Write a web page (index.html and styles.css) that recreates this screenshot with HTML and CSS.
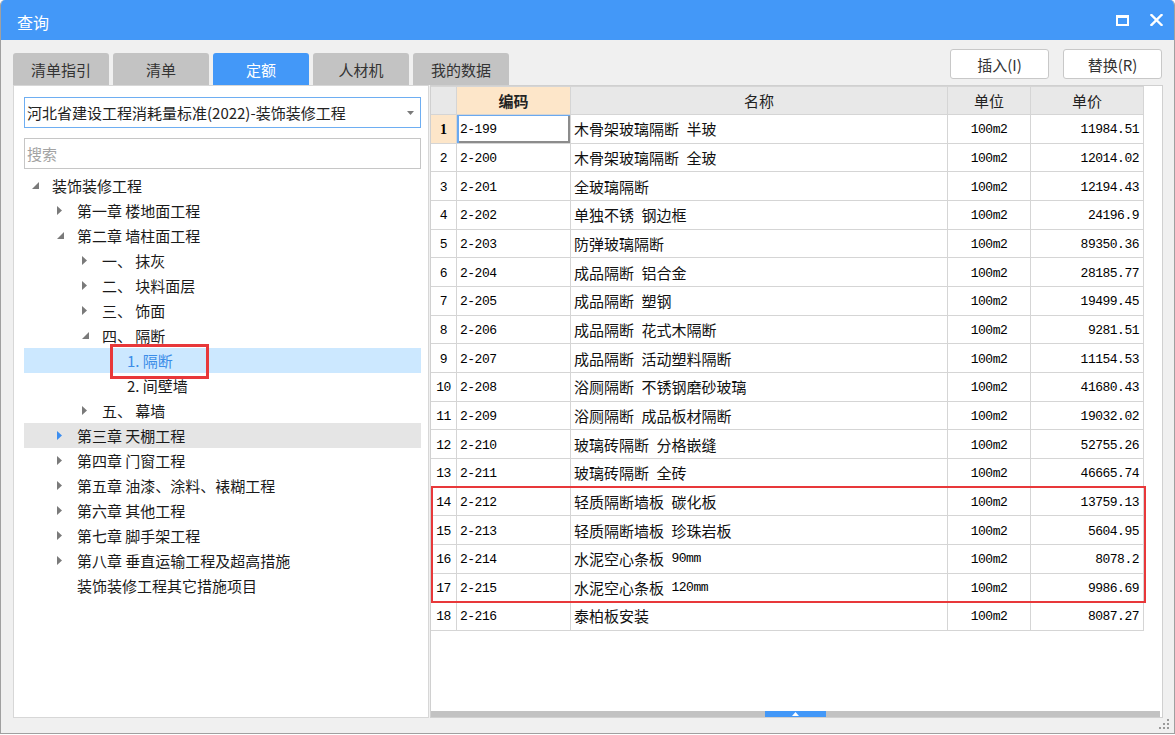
FILE: index.html
```html
<!DOCTYPE html>
<html lang="zh-CN">
<head>
<meta charset="utf-8">
<title>查询</title>
<link rel="stylesheet" href="styles.css">
</head>
<body>
<div class="window">
  <div class="titlebar">
    <span class="title">查询</span>
    <div class="win-ctrls">
      <svg class="ctrl" width="13" height="11" viewBox="0 0 13 11"><rect x="1" y="1.5" width="11" height="8.5" fill="none" stroke="#fff" stroke-width="2"/><rect x="0" y="0" width="13" height="3" fill="#fff"/></svg>
      <svg class="ctrl" width="13" height="12" viewBox="0 0 13 12"><path d="M1.5 1 L11.5 11 M11.5 1 L1.5 11" stroke="#fff" stroke-width="2.4" stroke-linecap="square" fill="none"/></svg>
    </div>
  </div>
  <div class="content">
    <div class="toolbar">
      <div class="tabs">
        <div class="tab">清单指引</div>
        <div class="tab">清单</div>
        <div class="tab active">定额</div>
        <div class="tab">人材机</div>
        <div class="tab">我的数据</div>
      </div>
      <div class="buttons">
        <button class="btn">插入(I)</button>
        <button class="btn">替换(R)</button>
      </div>
    </div>
    <div class="main">
      <div class="left-panel">
        <div class="combo">
          <span>河北省建设工程消耗量标准(2022)-装饰装修工程</span>
          <svg class="combo-arrow" width="7" height="4" viewBox="0 0 7 4"><polygon points="0,0 7,0 3.5,4" fill="#7a7a7a"/></svg>
        </div>
        <div class="search">搜索</div>
        <ul class="tree">
          <li class="node l0"><span class="twisty"><svg width="7" height="7" viewBox="0 0 7 7"><polygon points="7,0 7,7 0,7" fill="#7a7a7a"/></svg></span>装饰装修工程</li>
          <li class="node l1"><span class="twisty"><svg width="5" height="9" viewBox="0 0 5 9"><polygon points="0,0 5,4.5 0,9" fill="#7a7a7a"/></svg></span>第一章 楼地面工程</li>
          <li class="node l1"><span class="twisty"><svg width="7" height="7" viewBox="0 0 7 7"><polygon points="7,0 7,7 0,7" fill="#7a7a7a"/></svg></span>第二章 墙柱面工程</li>
          <li class="node l2"><span class="twisty"><svg width="5" height="9" viewBox="0 0 5 9"><polygon points="0,0 5,4.5 0,9" fill="#7a7a7a"/></svg></span>一、 抹灰</li>
          <li class="node l2"><span class="twisty"><svg width="5" height="9" viewBox="0 0 5 9"><polygon points="0,0 5,4.5 0,9" fill="#7a7a7a"/></svg></span>二、 块料面层</li>
          <li class="node l2"><span class="twisty"><svg width="5" height="9" viewBox="0 0 5 9"><polygon points="0,0 5,4.5 0,9" fill="#7a7a7a"/></svg></span>三、 饰面</li>
          <li class="node l2"><span class="twisty"><svg width="7" height="7" viewBox="0 0 7 7"><polygon points="7,0 7,7 0,7" fill="#7a7a7a"/></svg></span>四、 隔断</li>
          <li class="node l3 sel"><span class="twisty"></span>1. 隔断</li>
          <li class="node l3"><span class="twisty"></span>2. 间壁墙</li>
          <li class="node l2"><span class="twisty"><svg width="5" height="9" viewBox="0 0 5 9"><polygon points="0,0 5,4.5 0,9" fill="#7a7a7a"/></svg></span>五、 幕墙</li>
          <li class="node l1 hover"><span class="twisty"><svg width="5" height="9" viewBox="0 0 5 9"><polygon points="0,0 5,4.5 0,9" fill="#3d8ef0"/></svg></span>第三章 天棚工程</li>
          <li class="node l1"><span class="twisty"><svg width="5" height="9" viewBox="0 0 5 9"><polygon points="0,0 5,4.5 0,9" fill="#7a7a7a"/></svg></span>第四章 门窗工程</li>
          <li class="node l1"><span class="twisty"><svg width="5" height="9" viewBox="0 0 5 9"><polygon points="0,0 5,4.5 0,9" fill="#7a7a7a"/></svg></span>第五章 油漆、涂料、裱糊工程</li>
          <li class="node l1"><span class="twisty"><svg width="5" height="9" viewBox="0 0 5 9"><polygon points="0,0 5,4.5 0,9" fill="#7a7a7a"/></svg></span>第六章 其他工程</li>
          <li class="node l1"><span class="twisty"><svg width="5" height="9" viewBox="0 0 5 9"><polygon points="0,0 5,4.5 0,9" fill="#7a7a7a"/></svg></span>第七章 脚手架工程</li>
          <li class="node l1"><span class="twisty"><svg width="5" height="9" viewBox="0 0 5 9"><polygon points="0,0 5,4.5 0,9" fill="#7a7a7a"/></svg></span>第八章 垂直运输工程及超高措施</li>
          <li class="node l1"><span class="twisty"></span>装饰装修工程其它措施项目</li>
          <li class="mark tree-mark"></li>
        </ul>
      </div>
      <div class="right-panel">
        <div class="grid-wrap">
          <div class="grid">
            <div class="c h"></div><div class="c h hcode">编码</div><div class="c h">名称</div><div class="c h">单位</div><div class="c h">单价</div>

            <div class="c num cur">1</div><div class="c code focus">2-199</div><div class="c name">木骨架玻璃隔断&ensp;半玻</div><div class="c unit">100m2</div><div class="c price">11984.51</div>
            <div class="c num">2</div><div class="c code">2-200</div><div class="c name">木骨架玻璃隔断&ensp;全玻</div><div class="c unit">100m2</div><div class="c price">12014.02</div>
            <div class="c num">3</div><div class="c code">2-201</div><div class="c name">全玻璃隔断</div><div class="c unit">100m2</div><div class="c price">12194.43</div>
            <div class="c num">4</div><div class="c code">2-202</div><div class="c name">单独不锈&ensp;钢边框</div><div class="c unit">100m2</div><div class="c price">24196.9</div>
            <div class="c num">5</div><div class="c code">2-203</div><div class="c name">防弹玻璃隔断</div><div class="c unit">100m2</div><div class="c price">89350.36</div>
            <div class="c num">6</div><div class="c code">2-204</div><div class="c name">成品隔断&ensp;铝合金</div><div class="c unit">100m2</div><div class="c price">28185.77</div>
            <div class="c num">7</div><div class="c code">2-205</div><div class="c name">成品隔断&ensp;塑钢</div><div class="c unit">100m2</div><div class="c price">19499.45</div>
            <div class="c num">8</div><div class="c code">2-206</div><div class="c name">成品隔断&ensp;花式木隔断</div><div class="c unit">100m2</div><div class="c price">9281.51</div>
            <div class="c num">9</div><div class="c code">2-207</div><div class="c name">成品隔断&ensp;活动塑料隔断</div><div class="c unit">100m2</div><div class="c price">11154.53</div>
            <div class="c num">10</div><div class="c code">2-208</div><div class="c name">浴厕隔断&ensp;不锈钢磨砂玻璃</div><div class="c unit">100m2</div><div class="c price">41680.43</div>
            <div class="c num">11</div><div class="c code">2-209</div><div class="c name">浴厕隔断&ensp;成品板材隔断</div><div class="c unit">100m2</div><div class="c price">19032.02</div>
            <div class="c num">12</div><div class="c code">2-210</div><div class="c name">玻璃砖隔断&ensp;分格嵌缝</div><div class="c unit">100m2</div><div class="c price">52755.26</div>
            <div class="c num">13</div><div class="c code">2-211</div><div class="c name">玻璃砖隔断&ensp;全砖</div><div class="c unit">100m2</div><div class="c price">46665.74</div>
            <div class="c num">14</div><div class="c code">2-212</div><div class="c name">轻质隔断墙板&ensp;碳化板</div><div class="c unit">100m2</div><div class="c price">13759.13</div>
            <div class="c num">15</div><div class="c code">2-213</div><div class="c name">轻质隔断墙板&ensp;珍珠岩板</div><div class="c unit">100m2</div><div class="c price">5604.95</div>
            <div class="c num">16</div><div class="c code">2-214</div><div class="c name">水泥空心条板&ensp;<span class="mono">90mm</span></div><div class="c unit">100m2</div><div class="c price">8078.2</div>
            <div class="c num">17</div><div class="c code">2-215</div><div class="c name">水泥空心条板&ensp;<span class="mono">120mm</span></div><div class="c unit">100m2</div><div class="c price">9986.69</div>
            <div class="c num">18</div><div class="c code">2-216</div><div class="c name">泰柏板安装</div><div class="c unit">100m2</div><div class="c price">8087.27</div>
          </div>
          <div class="mark grid-mark"></div>
        </div>
        <div class="hscroll"><div class="thumb"><svg width="7" height="4" viewBox="0 0 7 4"><polygon points="3.5,0 7,4 0,4" fill="#fff"/></svg></div></div>
      </div>
    </div>
    <div class="statusbar">
      <svg width="11" height="11" viewBox="0 0 11 11"><g fill="#9a9a9a"><rect x="8" y="0" width="2" height="2"/><rect x="4" y="4" width="2" height="2"/><rect x="8" y="4" width="2" height="2"/><rect x="0" y="8" width="2" height="2"/><rect x="4" y="8" width="2" height="2"/><rect x="8" y="8" width="2" height="2"/></g></svg>
    </div>
  </div>
</div>
</body>
</html>
```

FILE: styles.css
```css
* { box-sizing: border-box; }
html, body { margin: 0; padding: 0; background: #fff; }
body {
  font-family: "Noto Sans CJK SC", "Microsoft YaHei", sans-serif;
  font-size: 15px;
  color: #222;
}
.window {
  width: 1175px;
  height: 734px;
  border: 1px solid #a0a0a0;
  border-top: 0;
  border-radius: 5px 5px 0 0;
  background: #f0f0f0;
  display: flex;
  flex-direction: column;
  overflow: hidden;
}
.titlebar {
  height: 40px;
  flex: none;
  background: #4398f8;
  color: #fff;
  display: flex;
  align-items: center;
  padding: 0 11px 0 16px;
}
.title { flex: 1; font-size: 16px; line-height: 1; margin-top: 3px; }
.win-ctrls { display: flex; align-items: center; gap: 21px; }
.ctrl { display: block; }

.content {
  flex: 1;
  display: flex;
  flex-direction: column;
  padding: 0 11px 0 12px;
}
.toolbar {
  height: 45px;
  flex: none;
  display: flex;
  justify-content: space-between;
}
.tabs { display: flex; gap: 4px; align-self: flex-end; }
.tab {
  width: 96px;
  height: 32px;
  background: #c3c3c3;
  border-radius: 3px 3px 0 0;
  display: flex;
  align-items: center;
  justify-content: center;
  color: #333;
  line-height: 1;
}
.tab.active { background: #4398f8; color: #fff; }
.buttons { display: flex; gap: 14px; margin-top: 9px; margin-right: 1px; }
.btn {
  width: 99px;
  height: 30px;
  padding: 0;
  border: 1px solid #c8c8c8;
  border-radius: 3px;
  background: #fff;
  font: inherit;
  color: #333;
  line-height: 1;
}

.main { height: 633px; flex: none; display: flex; gap: 1px; }
.left-panel {
  width: 416px;
  flex: none;
  background: #fff;
  border: 1px solid #d7d7d7;
  padding: 11px 7px 0 10px;
  display: flex;
  flex-direction: column;
}
.combo {
  height: 31px;
  flex: none;
  border: 1px solid #6eaef2;
  display: flex;
  align-items: center;
  justify-content: space-between;
  padding: 0 6px 0 2px;
  line-height: 1;
  color: #222;
}
.combo-arrow { display: block; }
.search {
  margin-top: 10px;
  height: 31px;
  flex: none;
  border: 1px solid #c6c6c6;
  display: flex;
  align-items: center;
  padding-left: 2px;
  color: #a3a3a3;
  line-height: 1;
}
.tree {
  list-style: none;
  margin: 4px 0 0;
  padding: 0;
  position: relative;
}
.node {
  height: 25px;
  display: flex;
  align-items: center;
  line-height: 1;
  white-space: nowrap;
  color: #1a1a1a;
}
.l0 { padding-left: 8px; }
.l1 { padding-left: 33px; }
.l2 { padding-left: 58px; }
.l3 { padding-left: 83px; }
.twisty { width: 20px; flex: none; display: flex; align-items: center; }
.twisty svg { display: block; }
.node.sel { background: #cce8ff; color: #3b8de8; }
.node.hover { background: #e5e5e5; }

.mark { position: absolute; border: 2px solid #e8383a; pointer-events: none; list-style: none; }
.tree-mark { left: 86px; top: 171px; width: 99px; height: 35px; border-width: 3px; }

.right-panel {
  flex: 1;
  background: #fff;
  border: 1px solid #d0d0d0;
  display: flex;
  flex-direction: column;
}
.grid-wrap { flex: 1; position: relative; }
.grid {
  display: grid;
  grid-template-columns: 26px 114px 377px 83px 113px;
  grid-template-rows: 29px repeat(18, 28.67px);
  width: 713px;
}
.c {
  border-right: 1px solid #d5d5d5;
  border-bottom: 1px solid #d5d5d5;
  display: flex;
  align-items: center;
  padding: 0 3px;
  white-space: nowrap;
  overflow: hidden;
  line-height: 1;
  color: #111;
}
.h {
  background: #e8e8e8;
  border-top: 1px solid #d5d5d5;
  justify-content: center;
  color: #222;
}
.h.hcode { background: #fde6c9; font-weight: bold; }
.num, .code, .unit, .price, .mono {
  font-family: "Liberation Mono", "DejaVu Sans Mono", monospace;
  font-size: 13px;
  letter-spacing: -0.5px;
  color: #000;
}
.num, .code, .unit, .price { padding-top: 2px; }
.mono { vertical-align: -2px; }
.num { justify-content: center; padding-left: 0; padding-right: 0; }
.num.cur {
  background: #fde6c9;
  font-family: "Liberation Serif", serif;
  font-weight: bold;
  font-size: 14px;
  letter-spacing: 0;
}
.code.focus {
  box-shadow: inset 2px 1px 0 #6aa9f0, inset -2px -2px 0 #8c8c8c;
}
.name { padding-left: 3px; }
.unit { justify-content: center; }
.price { justify-content: flex-end; padding-right: 4px; }
.grid-mark { left: 0; top: 400px; width: 715px; height: 117px; }

.hscroll {
  height: 6px;
  flex: none;
  background: #c2c2c2;
  display: flex;
  margin-right: 2px;
}
.thumb {
  margin-left: 334px;
  width: 61px;
  background: #4398f8;
  display: flex;
  align-items: center;
  justify-content: center;
}
.thumb svg { display: block; }

.statusbar {
  flex: 1;
  display: flex;
  justify-content: flex-end;
  align-items: flex-end;
  padding-bottom: 3px;
  margin-right: -7px;
}
.statusbar svg { display: block; }
```
